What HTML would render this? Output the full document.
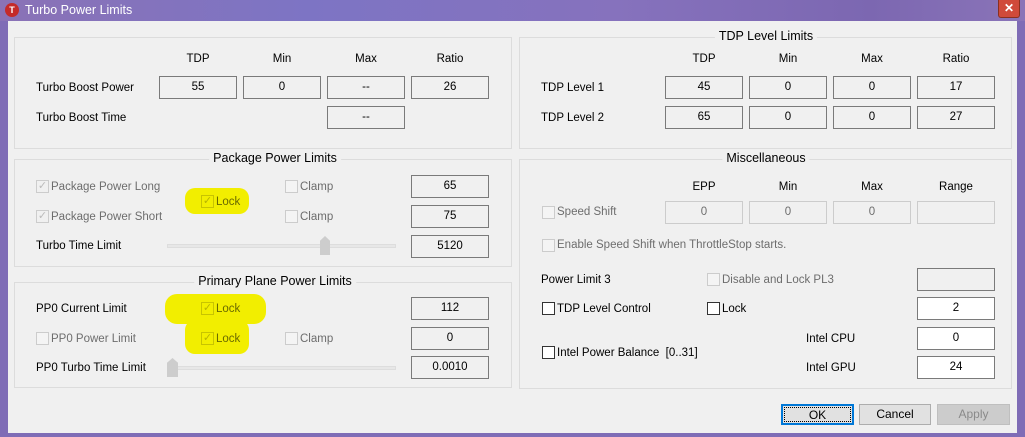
<!DOCTYPE html>
<html><head><style>
*{box-sizing:border-box;margin:0;padding:0}
body{width:1025px;height:437px;overflow:hidden;background:#7f6cb6;font-family:"Liberation Sans",sans-serif;font-size:11.5px;color:#000;position:relative}
.tb{position:absolute;left:0;top:0;width:1025px;height:21px;background:linear-gradient(90deg,#8a72b6 0%,#7d74c4 30%,#8672bd 60%,#7c67b1 85%,#8a74b8 100%)}
.content{position:absolute;left:8px;top:21px;width:1009px;height:412px;background:#f0f0f0}
.a{position:absolute;white-space:nowrap}
.g{position:absolute;border:1px solid #dcdcdc}
.gt{position:absolute;background:#f0f0f0;padding:0 4px;font-size:12.5px;top:-9px;transform:translateX(-50%)}
.bx{position:absolute;width:78px;height:23px;border:1px solid #7a7a7a;background:#f0f0f0;text-align:center;line-height:20px}
.bx.w{background:#fff}
.bx.d{border-color:#ccc;color:#6d6d6d}
.h{position:absolute;width:78px;text-align:center}
.cb{position:absolute;width:13px;height:13px;border:1px solid #333;background:#fff}
.cb.d{border-color:#ccc;background:#f4f4f4}
.ck{position:absolute;width:13px;height:13px;border:1px solid #ccc;color:#bbb;font-size:11px;line-height:11px;text-align:center}
.gr{color:#6d6d6d}
.hl{position:absolute;background:#f2ee00;border-radius:10px}
.btn{position:absolute;height:21px;border:1px solid #adadad;background:#e1e1e1;text-align:center;line-height:19px;font-size:12px}
</style></head><body>
<div class="tb">
<div class="a" style="left:5px;top:3px;width:14px;height:14px;border-radius:50%;background:#c42a2a;color:#fff;font-size:9px;font-weight:bold;text-align:center;line-height:14px">T</div>
<div class="a" style="left:25px;top:3px;color:#fff;font-size:12.5px">Turbo Power Limits</div>
<div class="a" style="left:998px;top:0;width:22px;height:18px;background:#d04a3a;border:1px solid #8a3020;border-top:none;border-radius:0 0 3px 3px;color:#fff;font-weight:bold;text-align:center;line-height:17px;font-size:12px">✕</div>
</div>
<div class="content"></div>

<div class="g" style="left:14px;top:37px;width:498px;height:112px"></div>
<div class="h" style="left:159px;top:53px">TDP</div><div class="h" style="left:243px;top:53px">Min</div><div class="h" style="left:327px;top:53px">Max</div><div class="h" style="left:411px;top:53px">Ratio</div>
<div class="a" style="left:36px;top:82px">Turbo Boost Power</div>
<div class="bx" style="left:159px;top:76px">55</div><div class="bx" style="left:243px;top:76px">0</div><div class="bx" style="left:327px;top:76px">--</div><div class="bx" style="left:411px;top:76px">26</div>
<div class="a" style="left:36px;top:112px">Turbo Boost Time</div>
<div class="bx" style="left:327px;top:106px">--</div>

<div class="g" style="left:519px;top:37px;width:493px;height:112px"><div class="gt" style="left:246px">TDP Level Limits</div></div>
<div class="h" style="left:665px;top:53px">TDP</div><div class="h" style="left:749px;top:53px">Min</div><div class="h" style="left:833px;top:53px">Max</div><div class="h" style="left:917px;top:53px">Ratio</div>
<div class="a" style="left:541px;top:82px">TDP Level 1</div>
<div class="bx" style="left:665px;top:76px">45</div><div class="bx" style="left:749px;top:76px">0</div><div class="bx" style="left:833px;top:76px">0</div><div class="bx" style="left:917px;top:76px">17</div>
<div class="a" style="left:541px;top:112px">TDP Level 2</div>
<div class="bx" style="left:665px;top:106px">65</div><div class="bx" style="left:749px;top:106px">0</div><div class="bx" style="left:833px;top:106px">0</div><div class="bx" style="left:917px;top:106px">27</div>

<div class="g" style="left:14px;top:159px;width:498px;height:108px"><div class="gt" style="left:260px">Package Power Limits</div></div>
<div class="hl" style="left:185px;top:188px;width:64px;height:26px"></div>
<div class="ck" style="left:36px;top:180px">✓</div><div class="a gr" style="left:51px;top:181px">Package Power Long</div>
<div class="ck" style="left:36px;top:210px">✓</div><div class="a gr" style="left:51px;top:211px">Package Power Short</div>
<div class="ck" style="left:201px;top:195px;border-color:#c8c400;color:#b8b400">✓</div><div class="a" style="left:216px;top:196px;color:#6a6a00">Lock</div>
<div class="cb d" style="left:285px;top:180px"></div><div class="a gr" style="left:300px;top:181px">Clamp</div>
<div class="cb d" style="left:285px;top:210px"></div><div class="a gr" style="left:300px;top:211px">Clamp</div>
<div class="bx" style="left:411px;top:175px">65</div><div class="bx" style="left:411px;top:205px">75</div><div class="bx" style="left:411px;top:235px">5120</div>
<div class="a" style="left:36px;top:240px">Turbo Time Limit</div>
<div class="a" style="left:167px;top:244px;width:229px;height:4px;border:1px solid #ddd;background:#e7e7e7"></div>
<div class="a" style="left:320px;top:236px;width:10px;height:19px;background:#cdcdcd;clip-path:polygon(50% 0,100% 25%,100% 100%,0 100%,0 25%)"></div>

<div class="g" style="left:14px;top:282px;width:498px;height:106px"><div class="gt" style="left:260px">Primary Plane Power Limits</div></div>
<div class="hl" style="left:165px;top:294px;width:101px;height:30px;border-radius:12px"></div>
<div class="hl" style="left:185px;top:320px;width:64px;height:34px"></div>
<div class="a" style="left:36px;top:303px">PP0 Current Limit</div>
<div class="ck" style="left:201px;top:302px;border-color:#c8c400;color:#b8b400">✓</div><div class="a" style="left:216px;top:303px;color:#6a6a00">Lock</div>
<div class="cb d" style="left:36px;top:332px"></div><div class="a gr" style="left:51px;top:333px">PP0 Power Limit</div>
<div class="ck" style="left:201px;top:332px;border-color:#c8c400;color:#b8b400">✓</div><div class="a" style="left:216px;top:333px;color:#6a6a00">Lock</div>
<div class="cb d" style="left:285px;top:332px"></div><div class="a gr" style="left:300px;top:333px">Clamp</div>
<div class="bx" style="left:411px;top:297px">112</div><div class="bx" style="left:411px;top:327px">0</div><div class="bx" style="left:411px;top:356px">0.0010</div>
<div class="a" style="left:36px;top:362px">PP0 Turbo Time Limit</div>
<div class="a" style="left:167px;top:366px;width:229px;height:4px;border:1px solid #ddd;background:#e7e7e7"></div>
<div class="a" style="left:167px;top:358px;width:11px;height:19px;background:#cdcdcd;clip-path:polygon(50% 0,100% 25%,100% 100%,0 100%,0 25%)"></div>

<div class="g" style="left:519px;top:159px;width:493px;height:230px"><div class="gt" style="left:246px">Miscellaneous</div></div>
<div class="h" style="left:665px;top:181px">EPP</div><div class="h" style="left:749px;top:181px">Min</div><div class="h" style="left:833px;top:181px">Max</div><div class="h" style="left:917px;top:181px">Range</div>
<div class="cb d" style="left:542px;top:206px"></div><div class="a gr" style="left:557px;top:206px">Speed Shift</div>
<div class="bx d" style="left:665px;top:201px">0</div><div class="bx d" style="left:749px;top:201px">0</div><div class="bx d" style="left:833px;top:201px">0</div><div class="bx d" style="left:917px;top:201px"></div>
<div class="cb d" style="left:542px;top:239px"></div><div class="a gr" style="left:557px;top:239px">Enable Speed Shift when ThrottleStop starts.</div>
<div class="a" style="left:541px;top:274px">Power Limit 3</div>
<div class="cb d" style="left:707px;top:273px"></div><div class="a gr" style="left:722px;top:274px">Disable and Lock PL3</div>
<div class="bx" style="left:917px;top:268px"></div>
<div class="cb" style="left:542px;top:302px"></div><div class="a" style="left:557px;top:303px">TDP Level Control</div>
<div class="cb" style="left:707px;top:302px"></div><div class="a" style="left:722px;top:303px">Lock</div>
<div class="bx w" style="left:917px;top:297px">2</div>
<div class="a" style="left:806px;top:333px">Intel CPU</div><div class="bx w" style="left:917px;top:327px">0</div>
<div class="cb" style="left:542px;top:346px"></div><div class="a" style="left:557px;top:347px">Intel Power Balance&nbsp;&nbsp;[0..31]</div>
<div class="a" style="left:806px;top:362px">Intel GPU</div><div class="bx w" style="left:917px;top:356px">24</div>

<div class="btn" style="left:781px;top:404px;width:73px;border:2px solid #0078d7;outline:1px dotted #000;outline-offset:-4px">OK</div>
<div class="btn" style="left:859px;top:404px;width:72px">Cancel</div>
<div class="btn" style="left:937px;top:404px;width:73px;background:#ccc;border-color:#bfbfbf;color:#8a8a8a">Apply</div>
</body></html>
